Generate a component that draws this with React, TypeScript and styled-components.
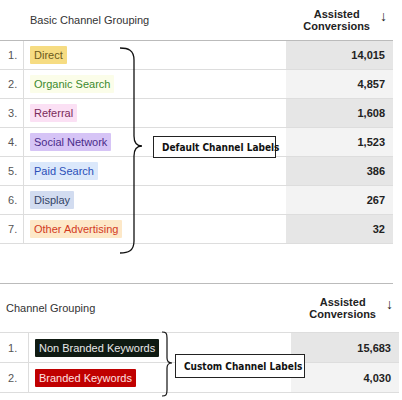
import React from 'react';
import styled, { createGlobalStyle } from 'styled-components';

const Global = createGlobalStyle`
  body { margin: 0; background: #fff; font-family: Arial, "Liberation Sans", sans-serif; }
`;

const Page = styled.div`
  width: 402px;
  height: 400px;
  position: relative;
  overflow: hidden;
`;

const Table = styled.div<{ $w: number; $num: number; $val: number }>`
  position: relative;
  width: ${p => p.$w}px;
  display: grid;
  grid-template-columns: ${p => p.$num}px 1fr ${p => p.$val}px;
`;

const Head = styled.div<{ $h: number; $pad: number; $line: string }>`
  grid-column: 1 / 3;
  height: ${p => p.$h}px;
  display: flex;
  align-items: center;
  padding-left: ${p => p.$pad}px;
  font-size: 11px;
  color: #333;
  border-bottom: 1px solid ${p => p.$line};
`;

const HeadVal = styled.div<{ $h: number; $line: string }>`
  height: ${p => p.$h}px;
  display: flex;
  align-items: center;
  justify-content: flex-end;
  gap: 10px;
  padding-right: 6px;
  font-size: 11px;
  font-weight: bold;
  color: #222;
  text-align: center;
  line-height: 12px;
  border-bottom: 1px solid ${p => p.$line};
`;

const Arrow = styled.span`
  font-size: 14px;
  font-weight: bold;
  margin-top: -8px;
`;

const Num = styled.div<{ $h: number }>`
  height: ${p => p.$h}px;
  display: flex;
  align-items: center;
  padding-left: 8px;
  font-size: 11px;
  color: #555;
  border-right: 1px solid #ddd;
  border-bottom: 1px solid #ddd;
`;

const LabelCell = styled.div`
  display: flex;
  align-items: center;
  padding-left: 6px;
  border-bottom: 1px solid #ddd;
`;

const Chip = styled.span<{ $bg: string; $fg: string }>`
  background: ${p => p.$bg};
  color: ${p => p.$fg};
  font-size: 11px;
  padding: 3px 4px;
  border-radius: 1px;
`;

const ValCell = styled.div<{ $dark: boolean }>`
  display: flex;
  align-items: center;
  justify-content: flex-end;
  padding-right: 8px;
  font-size: 11px;
  font-weight: bold;
  color: #222;
  background: ${p => (p.$dark ? '#e6e6e6' : '#f3f3f3')};
  border-bottom: 1px solid #ddd;
`;

const Callout = styled.div<{ $x: number; $y: number; $w: number; $h: number }>`
  position: absolute;
  left: ${p => p.$x}px;
  top: ${p => p.$y}px;
  width: ${p => p.$w}px;
  height: ${p => p.$h}px;
  box-sizing: border-box;
  border: 1px solid #222;
  background: #fff;
  font-family: "Liberation Sans Narrow", "DejaVu Sans Condensed", sans-serif;
  font-size: 10px;
  font-weight: bold;
  color: #111;
  white-space: nowrap;
  display: flex;
  align-items: center;
  padding-left: 8px;
`;

const Brace = styled.svg<{ $x: number; $y: number }>`
  position: absolute;
  left: ${p => p.$x}px;
  top: ${p => p.$y}px;
`;

const Divider = styled.div`
  height: 39px;
  border-bottom: 1px solid #bbb;
  width: 393px;
`;

const rows1 = [
  ['Direct', '#f6dc82', '#6b5a1a', '14,015'],
  ['Organic Search', '#fbfde9', '#3c8a2e', '4,857'],
  ['Referral', '#fbe0f4', '#7a2a5a', '1,608'],
  ['Social Network', '#d6c4f6', '#4a2c8a', '1,523'],
  ['Paid Search', '#dbe8fb', '#2a4fb8', '386'],
  ['Display', '#d2dcf0', '#334466', '267'],
  ['Other Advertising', '#fde8c8', '#d23a1e', '32'],
];

const rows2 = [
  ['Non Branded Keywords', '#0f1a12', '#e8e8e8', '15,683'],
  ['Branded Keywords', '#c00000', '#ffe0e0', '4,030'],
];

export default function App() {
  return (
    <Page>
      <Global />
      <Table $w={393} $num={24} $val={107}>
        <Head $h={40} $pad={30} $line="#bbb">Basic Channel Grouping</Head>
        <HeadVal $h={40} $line="#bbb">
          <span>Assisted<br />Conversions</span>
          <Arrow>↓</Arrow>
        </HeadVal>
        {rows1.map((r, i) => (
          <React.Fragment key={r[0]}>
            <Num $h={28}>{i + 1}.</Num>
            <LabelCell><Chip $bg={r[1]} $fg={r[2]}>{r[0]}</Chip></LabelCell>
            <ValCell $dark={i % 2 === 0}>{r[3]}</ValCell>
          </React.Fragment>
        ))}
        <Brace $x={118} $y={46} width="30" height="210" viewBox="0 0 30 210">
          <path d="M2 2 C10 2 16 4 16 14 L16 90 C16 96 18 100 24 100 C18 100 16 104 16 110 L16 195 C16 205 10 207 2 207" fill="none" stroke="#111" strokeWidth="1.3" />
        </Brace>
        <Callout $x={153} $y={136} $w={123} $h={22}>Default Channel Labels</Callout>
      </Table>
      <Divider />
      <Table $w={399} $num={29} $val={108}>
        <Head $h={48} $pad={6} $line="#ddd">Channel Grouping</Head>
        <HeadVal $h={48} $line="#ddd">
          <span>Assisted<br />Conversions</span>
          <Arrow>↓</Arrow>
        </HeadVal>
        {rows2.map((r, i) => (
          <React.Fragment key={r[0]}>
            <Num $h={29}>{i + 1}.</Num>
            <LabelCell><Chip $bg={r[1]} $fg={r[2]}>{r[0]}</Chip></LabelCell>
            <ValCell $dark={i % 2 === 0}>{r[3]}</ValCell>
          </React.Fragment>
        ))}
        <Brace $x={160} $y={46} width="16" height="68" viewBox="0 0 16 68">
          <path d="M2 2 C6 2 7 3 7 8 L7 28 C7 31 9 33 12 33 C9 33 7 35 7 38 L7 60 C7 65 6 66 2 66" fill="none" stroke="#111" strokeWidth="1.2" />
        </Brace>
        <Callout $x={175} $y={70} $w={130} $h={24}>Custom Channel Labels</Callout>
      </Table>
    </Page>
  );
}
